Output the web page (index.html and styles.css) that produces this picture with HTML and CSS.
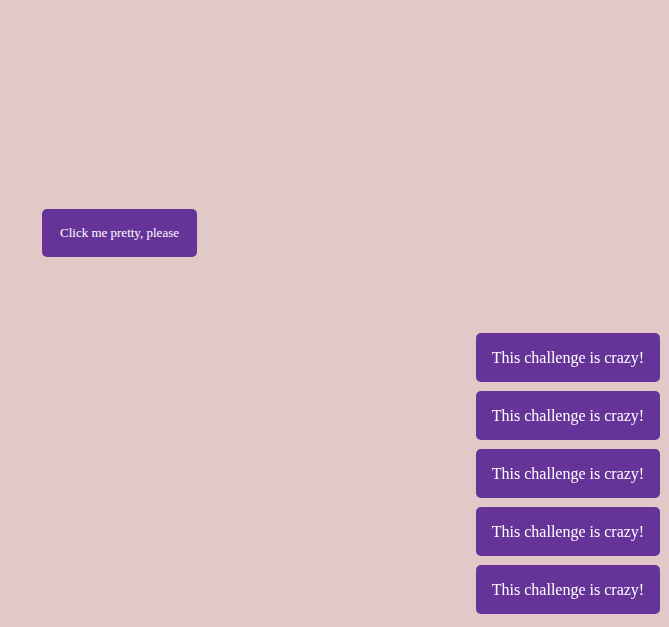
FILE: index.html
```html
<!DOCTYPE html>
<html>
<head>
<meta charset="utf-8">
<link rel="stylesheet" href="styles.css">
</head>
<body>
<main class="stage">
  <button class="btn btn-small">Click me pretty, please</button>
</main>
<div class="toasts">
  <button class="btn btn-toast">This challenge is crazy!</button>
  <button class="btn btn-toast">This challenge is crazy!</button>
  <button class="btn btn-toast">This challenge is crazy!</button>
  <button class="btn btn-toast">This challenge is crazy!</button>
  <button class="btn btn-toast">This challenge is crazy!</button>
</div>
</body>
</html>
```

FILE: styles.css
```css
html, body {
  margin: 0;
  padding: 0;
  background: #e3c8c8;
  height: 100%;
  overflow: hidden;
  font-family: "Liberation Serif", "Times New Roman", serif;
}
.stage {
  padding: 209px 0 0 42px;
}
.btn {
  box-sizing: border-box;
  display: flex;
  align-items: center;
  justify-content: center;
  white-space: nowrap;
  background: #663399;
  color: #ffffff;
  border: 0;
  border-radius: 5px;
  font-family: "Liberation Serif", "Times New Roman", serif;
  padding: 0;
  cursor: pointer;
}
.btn-small {
  font-size: 13px;
  width: 155px;
  height: 48px;
}
.btn-toast {
  font-size: 16px;
  width: 184px;
  height: 49px;
}
.toasts {
  position: fixed;
  right: 9px;
  bottom: 13px;
  display: flex;
  flex-direction: column;
  gap: 9px;
}
```
